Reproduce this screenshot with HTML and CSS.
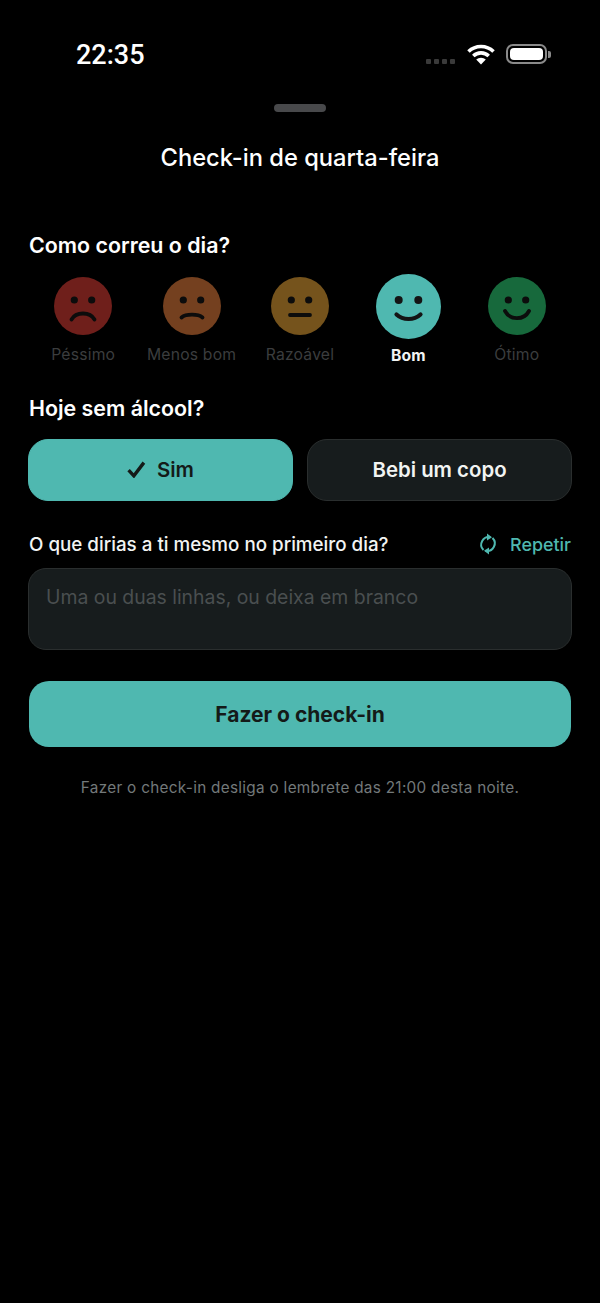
FILE: index.html
```html
<!DOCTYPE html>
<html lang="pt">
<head>
    <meta charset="UTF-8">
    <meta name="viewport" content="width=device-width, initial-scale=1.0">
    <title>Check-in</title>
    <link rel="stylesheet" href="styles.css">
</head>
<body>
    <div class="status-bar">
        <span class="time">22:35</span>
        <div class="status-icons">
            <div class="signal"><i></i><i></i><i></i><i></i></div>
            <svg class="wifi" width="28" height="21" viewBox="0 0 28 21">
                <path d="M1.5 7.5 A18 18 0 0 1 26.5 7.5" fill="none" stroke="#fff" stroke-width="3.6"/>
                <path d="M6.3 12 A11 11 0 0 1 21.7 12" fill="none" stroke="#fff" stroke-width="3.6"/>
                <path d="M14 20.5 L9.2 15.6 A7 7 0 0 1 18.8 15.6 Z" fill="#fff"/>
            </svg>
            <div class="battery"><div class="battery-fill"></div></div>
            <div class="battery-cap"></div>
        </div>
    </div>

    <div class="sheet">
        <div class="handle"></div>
        <h1 class="title">Check-in de quarta-feira</h1>

        <h2 class="section-label">Como correu o dia?</h2>
        <div class="moods">
            <div class="mood">
                <svg class="face" viewBox="0 0 58 58">
                    <circle cx="29" cy="29" r="29" fill="#6f1f1b"/>
                    <circle cx="20.3" cy="23" r="3.6" fill="#0c0c0c"/>
                    <circle cx="37.7" cy="23" r="3.6" fill="#0c0c0c"/>
                    <path d="M17.5 42.5 C22 34.5 36 34.5 40.5 42.5" fill="none" stroke="#0c0c0c" stroke-width="3.8" stroke-linecap="round"/>
                </svg>
                <span class="mood-name">Péssimo</span>
            </div>
            <div class="mood">
                <svg class="face" viewBox="0 0 58 58">
                    <circle cx="29" cy="29" r="29" fill="#74401f"/>
                    <circle cx="20.3" cy="23" r="3.6" fill="#0c0c0c"/>
                    <circle cx="37.7" cy="23" r="3.6" fill="#0c0c0c"/>
                    <path d="M18.5 40.5 C23 36.7 35 36.7 39.5 40.5" fill="none" stroke="#0c0c0c" stroke-width="3.8" stroke-linecap="round"/>
                </svg>
                <span class="mood-name">Menos bom</span>
            </div>
            <div class="mood">
                <svg class="face" viewBox="0 0 58 58">
                    <circle cx="29" cy="29" r="29" fill="#75531c"/>
                    <circle cx="20.3" cy="23" r="3.6" fill="#0c0c0c"/>
                    <circle cx="37.7" cy="23" r="3.6" fill="#0c0c0c"/>
                    <path d="M19 38 H39" fill="none" stroke="#0c0c0c" stroke-width="3.8" stroke-linecap="round"/>
                </svg>
                <span class="mood-name">Razoável</span>
            </div>
            <div class="mood selected">
                <svg class="face" viewBox="0 0 65 65">
                    <circle cx="32.5" cy="32.5" r="32.5" fill="#4fb8b0"/>
                    <circle cx="22.7" cy="26" r="4" fill="#141414"/>
                    <circle cx="42.3" cy="26" r="4" fill="#141414"/>
                    <path d="M20.5 40.5 C27 46.5 38 46.5 44.5 40.5" fill="none" stroke="#141414" stroke-width="4.2" stroke-linecap="round"/>
                </svg>
                <span class="mood-name">Bom</span>
            </div>
            <div class="mood">
                <svg class="face" viewBox="0 0 58 58">
                    <circle cx="29" cy="29" r="29" fill="#17693c"/>
                    <circle cx="20.3" cy="23" r="3.6" fill="#0c0c0c"/>
                    <circle cx="37.7" cy="23" r="3.6" fill="#0c0c0c"/>
                    <path d="M17 34 C22 43.5 36 43.5 41 34" fill="none" stroke="#0c0c0c" stroke-width="3.8" stroke-linecap="round"/>
                </svg>
                <span class="mood-name">Ótimo</span>
            </div>
        </div>

        <h2 class="section-label alcohol-label">Hoje sem álcool?</h2>
        <div class="choices">
            <button class="choice active">
                <svg width="19" height="17" viewBox="0 0 18 16"><path d="M1.5 8.5 L6.5 14 L16 1.5" fill="none" stroke="#141a18" stroke-width="3.2"/></svg>
                Sim
            </button>
            <button class="choice">Bebi um copo</button>
        </div>

        <div class="prompt-row">
            <span class="prompt">O que dirias a ti mesmo no primeiro dia?</span>
            <span class="repeat">
                <svg width="20" height="22" viewBox="0 0 20 22">
                    <path d="M12.5 4.2 A7.6 7.6 0 0 0 5.5 17" fill="none" stroke="#4fb8b0" stroke-width="2"/>
                    <path d="M7.5 17.8 A7.6 7.6 0 0 0 14.5 5" fill="none" stroke="#4fb8b0" stroke-width="2"/>
                    <path d="M9 0.5 L14 4.2 L9 7.5 Z" fill="#4fb8b0"/>
                    <path d="M11 21.5 L6 17.8 L11 14.5 Z" fill="#4fb8b0"/>
                </svg>
                Repetir
            </span>
        </div>
        <div class="note-box">Uma ou duas linhas, ou deixa em branco</div>

        <button class="submit">Fazer o check-in</button>
        <p class="footnote">Fazer o check-in desliga o lembrete das 21:00 desta noite.</p>
    </div>
</body>
</html>
```

FILE: styles.css
```css
* {
    box-sizing: border-box;
}
body {
    margin: 0;
    height: 1303px;
    overflow: hidden;
    background-color: #000000;
    color: #ffffff;
    font-family: Inter, "Noto Sans", sans-serif;
}
.status-bar {
    height: 104px;
    padding: 40px 49px 0 76px;
    display: flex;
    justify-content: space-between;
    align-items: flex-start;
}
.time {
    font-family: Roboto, Inter, sans-serif;
    font-size: 27px;
    line-height: 30px;
    font-weight: 500;
}
.status-icons {
    display: flex;
    align-items: center;
    height: 28px;
}
.signal {
    display: flex;
    gap: 3px;
    margin-top: 15px;
    margin-right: 12px;
}
.signal i {
    width: 5px;
    height: 5px;
    border-radius: 1px;
    background-color: #3a3a3a;
}
.wifi {
    margin-right: 11px;
}
.battery {
    width: 41px;
    height: 20px;
    padding: 2px;
    border: 2px solid #8a8a8a;
    border-radius: 7px;
}
.battery-fill {
    height: 100%;
    border-radius: 4px;
    background-color: #ffffff;
}
.battery-cap {
    width: 3px;
    height: 7px;
    margin-left: 1px;
    border-radius: 0 2px 2px 0;
    background-color: #8a8a8a;
}
.sheet {
    padding: 0 29px;
}
.handle {
    width: 52px;
    height: 8px;
    margin: 0 auto;
    border-radius: 4px;
    background-color: #48494b;
}
.title {
    margin: 31px 0 0;
    font-size: 23.7px;
    line-height: 30px;
    font-weight: 500;
    text-align: center;
}
.section-label {
    margin: 58px 0 0;
    font-size: 21.4px;
    line-height: 28px;
    font-weight: 600;
}
.moods {
    display: grid;
    grid-template-columns: repeat(5, 1fr);
    margin-top: 15px;
}
.mood {
    display: flex;
    flex-direction: column;
    align-items: center;
}
.face {
    display: block;
    width: 58px;
    height: 58px;
    margin: 3px 0;
}
.mood.selected .face {
    width: 65px;
    height: 65px;
    margin: 0;
}
.mood-name {
    margin-top: 6px;
    font-size: 15.7px;
    line-height: 22px;
    letter-spacing: 0.2px;
    color: #3b3d3e;
}
.mood.selected .mood-name {
    color: #f2f4f3;
    font-weight: 700;
}
.alcohol-label {
    margin-top: 27px;
}
.choices {
    display: grid;
    grid-template-columns: 1fr 1fr;
    gap: 14px;
    margin: 17px -1px 0;
}
.choice {
    height: 62px;
    padding-bottom: 2px;
    display: flex;
    align-items: center;
    justify-content: center;
    gap: 11px;
    border: 1px solid #2a2e2e;
    border-radius: 20px;
    background-color: #171c1d;
    color: #f2f4f3;
    font-family: inherit;
    font-size: 20.4px;
    font-weight: 600;
}
.choice.active {
    border-color: #4fb8b0;
    background-color: #4fb8b0;
    color: #141a18;
}
.prompt-row {
    display: flex;
    justify-content: space-between;
    align-items: center;
    margin-top: 29px;
    height: 28px;
}
.prompt {
    font-size: 18.8px;
    font-weight: 500;
    color: #f2f4f3;
}
.repeat {
    display: flex;
    align-items: center;
    gap: 12px;
    font-size: 17.9px;
    font-weight: 500;
    color: #4fb8b0;
}
.note-box {
    height: 82px;
    margin: 10px -1px 0;
    padding: 16px 17px;
    border: 1px solid #2a2e2e;
    border-radius: 18px;
    background-color: #171c1d;
    font-size: 19.4px;
    line-height: 24px;
    color: #4a4f50;
}
.submit {
    display: block;
    width: 100%;
    height: 66px;
    margin: 31px 0 0;
    border: none;
    border-radius: 20px;
    background-color: #4fb8b0;
    color: #141a18;
    font-family: inherit;
    font-size: 21px;
    font-weight: 700;
}
.footnote {
    margin: 30px 0 0;
    font-size: 15.3px;
    line-height: 22px;
    letter-spacing: 0.3px;
    text-align: center;
    color: #73797a;
}
```
